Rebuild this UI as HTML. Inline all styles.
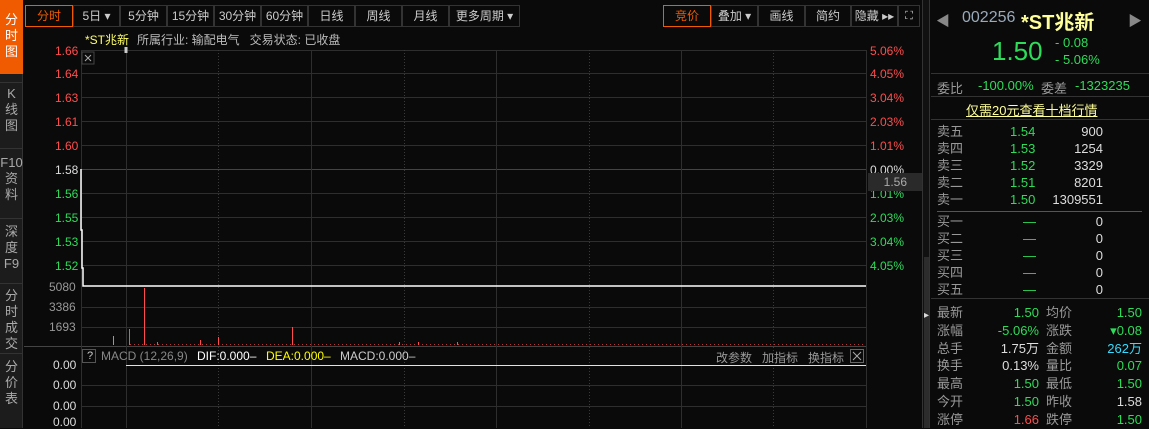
<!DOCTYPE html>
<html><head><meta charset="utf-8"><style>
*{margin:0;padding:0;box-sizing:border-box}
body{width:1149px;height:428px;background:#0a0a0a;overflow:hidden;position:relative;font-family:"Liberation Sans","Noto Sans CJK SC",sans-serif;font-size:12px;color:#bbb}
.a{position:absolute;white-space:nowrap}
.side{position:absolute;left:0;top:0;width:23px;height:428px;background:#1c1c1c;border-right:1px solid #333}
.sb{position:absolute;left:0;width:23px;text-align:center;color:#aaa;font-size:13px;line-height:16px}
.tb{position:absolute;top:5px;height:22px;border:1px solid #333;text-align:center;line-height:20px;color:#ccc;font-size:12px}
.r{color:#ff4d4d}.g{color:#2edc5a}.w{color:#ddd}.gy{color:#999}
.rp{position:absolute;left:931px;width:218px}
</style></head><body>
<div class="side">
<div class="sb" style="top:0;height:74px;background:#f05a00;color:#fff;padding-top:12px">分<br>时<br>图</div>
<div class="sb" style="top:82px;border-top:1px solid #333;padding-top:3px">K<br>线<br>图</div>
<div class="sb" style="top:148px;border-top:1px solid #333;padding-top:6px">F10<br>资<br>料</div>
<div class="sb" style="top:218px;border-top:1px solid #333;padding-top:5px">深<br>度<br>F9</div>
<div class="sb" style="top:283px;border-top:1px solid #333;padding-top:4px">分<br>时<br>成<br>交</div>
<div class="sb" style="top:353px;border-top:1px solid #333;padding-top:5px">分<br>价<br>表</div>
</div>
<div class="tb" style="left:25px;width:48px;border-color:#f05a00;color:#f05a00">分时</div>
<div class="tb" style="left:73px;width:47px">5日 ▾</div>
<div class="tb" style="left:120px;width:47px">5分钟</div>
<div class="tb" style="left:167px;width:47px">15分钟</div>
<div class="tb" style="left:214px;width:47px">30分钟</div>
<div class="tb" style="left:261px;width:47px">60分钟</div>
<div class="tb" style="left:308px;width:47px">日线</div>
<div class="tb" style="left:355px;width:47px">周线</div>
<div class="tb" style="left:402px;width:47px">月线</div>
<div class="tb" style="left:449px;width:71px">更多周期 ▾</div>
<div class="tb" style="left:663px;width:48px;border-color:#f05a00;color:#f05a00">竞价</div>
<div class="tb" style="left:711px;width:47px">叠加 ▾</div>
<div class="tb" style="left:758px;width:47px">画线</div>
<div class="tb" style="left:805px;width:46px">简约</div>
<div class="tb" style="left:851px;width:47px">隐藏 ▸▸</div>
<div class="tb" style="left:898px;width:22px;font-size:11px">⛶</div>
<div class="a" style="left:85px;top:31px;color:#ffff66">*ST兆新</div>
<div class="a" style="left:137px;top:31px;color:#bbb">所属行业: 输配电气&nbsp;&nbsp;&nbsp;交易状态: 已收盘</div>
<svg class="a" style="left:0;top:0" width="930" height="428">
<g stroke="#2e2e2e" stroke-width="1">
<line x1="81" y1="50.5" x2="866" y2="50.5"/><line x1="81" y1="73.5" x2="866" y2="73.5"/><line x1="81" y1="97.5" x2="866" y2="97.5"/><line x1="81" y1="121.5" x2="866" y2="121.5"/><line x1="81" y1="145.5" x2="866" y2="145.5"/>
<line x1="81" y1="169.5" x2="866" y2="169.5" stroke="#444"/><line x1="81" y1="193.5" x2="866" y2="193.5"/><line x1="81" y1="217.5" x2="866" y2="217.5"/><line x1="81" y1="241.5" x2="866" y2="241.5"/><line x1="81" y1="265.5" x2="866" y2="265.5"/>
<line x1="81" y1="307.5" x2="866" y2="307.5"/><line x1="81" y1="327.5" x2="866" y2="327.5"/><line x1="24" y1="346.5" x2="866" y2="346.5" stroke="#444"/>
<line x1="81" y1="385.5" x2="866" y2="385.5"/><line x1="81" y1="406.5" x2="866" y2="406.5"/>
<line x1="81.5" y1="50" x2="81.5" y2="428"/><line x1="126.5" y1="50" x2="126.5" y2="428"/><line x1="311.5" y1="50" x2="311.5" y2="428"/><line x1="496.5" y1="50" x2="496.5" y2="428"/><line x1="681.5" y1="50" x2="681.5" y2="428"/><line x1="866.5" y1="50" x2="866.5" y2="428"/>
</g>
<g stroke="#3a3a3a" stroke-dasharray="1,2"><line x1="218.5" y1="50" x2="218.5" y2="428"/><line x1="404.5" y1="50" x2="404.5" y2="428"/><line x1="589.5" y1="50" x2="589.5" y2="428"/><line x1="773.5" y1="50" x2="773.5" y2="428"/></g>
<polyline fill="none" stroke="#fff" stroke-width="1.5" points="81,169 81,230 82,230 82,268 83,268 83,286 866,286"/>
<rect x="82" y="52" width="12" height="12" fill="none" stroke="#444"/><path d="M85 55l6 6M91 55l-6 6" stroke="#aaa"/>
<path d="M126 47v6" stroke="#ccc" stroke-width="3"/>
<line x1="113.5" y1="336" x2="113.5" y2="345" stroke="#2edc5a"/>
<g stroke="#ff4d4d"><line x1="129.5" y1="329" x2="129.5" y2="345"/><line x1="144.5" y1="288" x2="144.5" y2="345"/><line x1="157.5" y1="342" x2="157.5" y2="345"/><line x1="200.5" y1="340" x2="200.5" y2="345"/><line x1="218.5" y1="337" x2="218.5" y2="345"/><line x1="292.5" y1="327" x2="292.5" y2="345"/><line x1="418.5" y1="342" x2="418.5" y2="345"/><line x1="457.5" y1="342" x2="457.5" y2="345"/><line x1="399.5" y1="342" x2="399.5" y2="345"/></g>
<line x1="130" y1="344.5" x2="866" y2="344.5" stroke="#ff4d4d" stroke-dasharray="1,3" opacity=".7"/>
<line x1="126" y1="365.5" x2="866" y2="365.5" stroke="#ffff00"/>
<rect x="82.5" y="349.5" width="13" height="13" fill="none" stroke="#555"/>
<rect x="850.5" y="349.5" width="13" height="13" fill="none" stroke="#666"/><path d="M853 352l8 8M861 352l-8 8" stroke="#aaa"/>
</svg>
<div class="a r" style="left:55px;top:44px">1.66</div>
<div class="a r" style="left:55px;top:67px">1.64</div>
<div class="a r" style="left:55px;top:91px">1.63</div>
<div class="a r" style="left:55px;top:115px">1.61</div>
<div class="a r" style="left:55px;top:139px">1.60</div>
<div class="a w" style="left:55px;top:163px">1.58</div>
<div class="a g" style="left:55px;top:187px">1.56</div>
<div class="a g" style="left:55px;top:211px">1.55</div>
<div class="a g" style="left:55px;top:235px">1.53</div>
<div class="a g" style="left:55px;top:259px">1.52</div>
<div class="a gy" style="left:49px;top:280px">5080</div>
<div class="a gy" style="left:49px;top:300px">3386</div>
<div class="a gy" style="left:49px;top:320px">1693</div>
<div class="a w" style="left:53px;top:358px">0.00</div>
<div class="a w" style="left:53px;top:378px">0.00</div>
<div class="a w" style="left:53px;top:399px">0.00</div>
<div class="a w" style="left:53px;top:415px">0.00</div>
<div class="a r" style="left:870px;top:44px">5.06%</div>
<div class="a r" style="left:870px;top:67px">4.05%</div>
<div class="a r" style="left:870px;top:91px">3.04%</div>
<div class="a r" style="left:870px;top:115px">2.03%</div>
<div class="a r" style="left:870px;top:139px">1.01%</div>
<div class="a w" style="left:870px;top:163px">0.00%</div>
<div class="a g" style="left:870px;top:187px">1.01%</div>
<div class="a g" style="left:870px;top:211px">2.03%</div>
<div class="a g" style="left:870px;top:235px">3.04%</div>
<div class="a g" style="left:870px;top:259px">4.05%</div>
<div class="a" style="left:868px;top:173px;width:55px;height:18px;background:#2a2a2a;color:#aaa;text-align:right;padding-right:16px;line-height:18px">1.56</div>
<div class="a" style="left:87px;top:350px;color:#ccc;font-size:11px">?</div>
<div class="a" style="left:101px;top:349px;color:#888">MACD (12,26,9)</div>
<div class="a" style="left:197px;top:349px;color:#fff">DIF:0.000–</div>
<div class="a" style="left:266px;top:349px;color:#ffff00">DEA:0.000–</div>
<div class="a" style="left:340px;top:349px;color:#ccc">MACD:0.000–</div>
<div class="a gy" style="left:716px;top:349px">改参数&nbsp;&nbsp;&nbsp;加指标&nbsp;&nbsp;&nbsp;换指标</div>
<div class="a" style="left:922px;top:0;width:8px;height:428px;background:#111;border-left:1px solid #333;border-right:1px solid #333"></div>
<div class="a" style="left:924px;top:257px;width:5px;height:171px;background:#2c2c2c"></div>
<div class="a" style="left:924px;top:310px;color:#ddd;font-size:10px">▸</div>
<div class="a" style="left:936px;top:11px;color:#888;font-size:14px">◀</div>
<div class="a" style="left:1128px;top:11px;color:#888;font-size:14px">▶</div>
<div class="a" style="left:962px;top:9px;color:#9ab;font-size:16px">002256</div>
<div class="a" style="left:1021px;top:6px;color:#ffff99;font-size:20px;font-weight:bold">*ST兆新</div>
<div class="a" style="left:992px;top:36px;color:#2edc5a;font-size:26px">1.50</div>
<div class="a g" style="left:1055px;top:35px;font-size:13px">- 0.08</div>
<div class="a g" style="left:1055px;top:52px;font-size:13px">- 5.06%</div>
<div class="rp" style="top:73px;height:1px;background:#333"></div>
<div class="a gy" style="left:937px;top:78px;font-size:13px">委比</div>
<div class="a g" style="left:978px;top:78px;font-size:13px">-100.00%</div>
<div class="a gy" style="left:1041px;top:78px;font-size:13px">委差</div>
<div class="a g" style="left:1075px;top:78px;font-size:13px">-1323235</div>
<div class="rp" style="top:96px;height:1px;background:#333"></div>
<div class="a" style="left:966px;top:100px;color:#ffff99;font-size:13px;text-decoration:underline">仅需20元查看十档行情</div>
<div class="rp" style="top:119px;height:1px;background:#333"></div>
<div class="a gy" style="left:937px;top:123px;font-size:13px;line-height:17px">卖五<br>卖四<br>卖三<br>卖二<br>卖一</div>
<div class="a g" style="left:1010px;top:123px;font-size:13px;line-height:17px">1.54<br>1.53<br>1.52<br>1.51<br>1.50</div>
<div class="a w" style="left:1050px;top:123px;width:53px;text-align:right;font-size:13px;line-height:17px">900<br>1254<br>3329<br>8201<br>1309551</div>
<div class="a" style="left:937px;top:211px;width:205px;height:1px;background:#555"></div>
<div class="a gy" style="left:937px;top:213px;font-size:13px;line-height:17px">买一<br>买二<br>买三<br>买四<br>买五</div>
<div class="a g" style="left:1023px;top:213px;font-size:13px;line-height:17px">—<br>—<br>—<br>—<br>—</div>
<div class="a w" style="left:1050px;top:213px;width:53px;text-align:right;font-size:13px;line-height:17px">0<br>0<br>0<br>0<br>0</div>
<div class="rp" style="top:298px;height:1px;background:#333"></div>
<div class="a gy" style="left:937px;top:304px;font-size:13px;line-height:17.8px">最新<br>涨幅<br>总手<br>换手<br>最高<br>今开<br>涨停</div>
<div class="a" style="left:980px;top:304px;width:59px;text-align:right;font-size:13px;line-height:17.8px"><span class="g">1.50</span><br><span class="g">-5.06%</span><br><span class="w">1.75万</span><br><span class="w">0.13%</span><br><span class="g">1.50</span><br><span class="g">1.50</span><br><span class="r">1.66</span></div>
<div class="a gy" style="left:1046px;top:304px;font-size:13px;line-height:17.8px">均价<br>涨跌<br>金额<br>量比<br>最低<br>昨收<br>跌停</div>
<div class="a" style="left:1085px;top:304px;width:57px;text-align:right;font-size:13px;line-height:17.8px"><span class="g">1.50</span><br><span class="g">▾0.08</span><br><span style="color:#33ddff">262万</span><br><span class="g">0.07</span><br><span class="g">1.50</span><br><span class="w">1.58</span><br><span class="g">1.50</span></div>
</body></html>
